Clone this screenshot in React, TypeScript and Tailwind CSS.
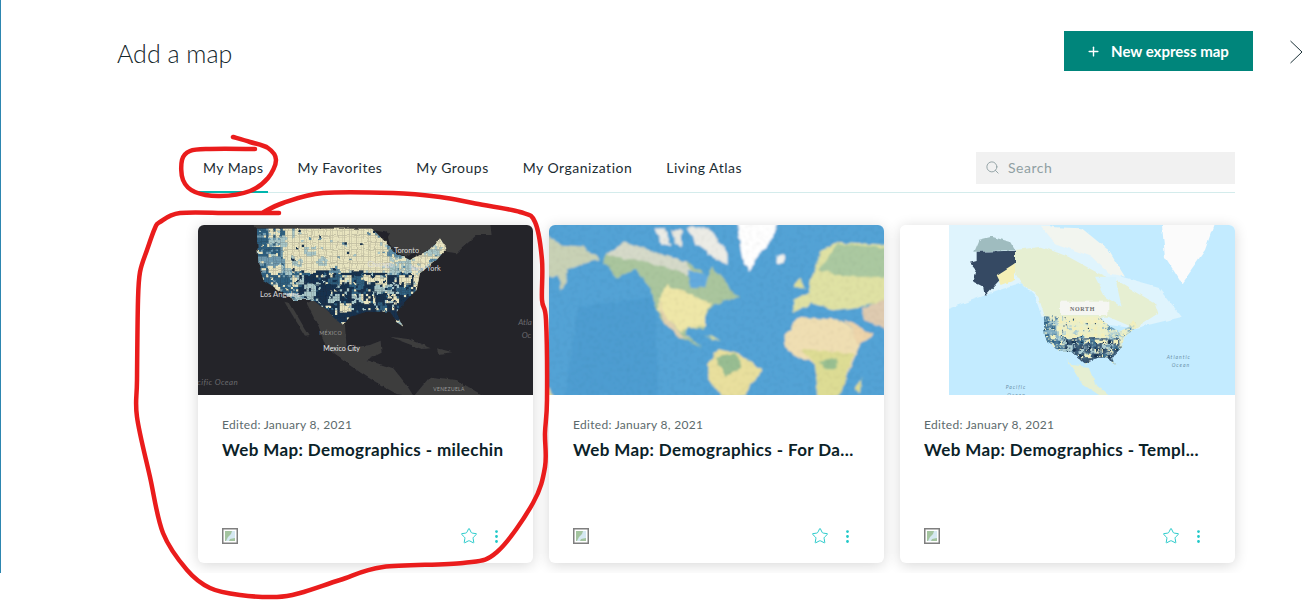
import { EllipsisVertical, Plus, Search, Star } from 'lucide-react';

const tabs = ['My Maps', 'My Favorites', 'My Groups', 'My Organization', 'Living Atlas'];

const cards = [
  { id: 'dark', title: 'Web Map: Demographics - milechin' },
  { id: 'imagery', title: 'Web Map: Demographics - For Da...' },
  { id: 'topo', title: 'Web Map: Demographics - Templ...' },
];

// all map shapes are written in the 3x coordinates of the card crop
const usOutline =
  '200,25 545,25 590,70 610,95 660,120 720,90 750,55 770,85 740,120 690,160 680,210 640,250 620,280 640,320 625,310 600,275 530,275 480,290 460,315 420,280 370,240 310,240 220,180 205,130';

function hash(a: number, b: number) {
  const n = Math.sin(a * 12.9898 + b * 78.233) * 43758.5453;
  return n - Math.floor(n);
}

function cellColor(u: number, v: number, r: number, beige: string) {
  const south = u > 0.24 && u < 0.84 && v > 0.42 && v < 0.92;
  const north = u > 0.17 && u < 0.66 && v <= 0.42;
  if (south) return r < 0.6 ? '#17324f' : r < 0.72 ? '#2f6080' : r < 0.85 ? '#a9c7c8' : beige;
  if (north) return r < 0.9 ? beige : r < 0.95 ? '#a9c7c8' : r < 0.98 ? '#5f8fa8' : '#17324f';
  if (u <= 0.24) return r < 0.22 ? '#2f6080' : r < 0.5 ? '#6f9bb0' : r < 0.75 ? '#a9c7c8' : beige;
  return r < 0.6 ? beige : r < 0.85 ? '#a9c7c8' : '#5f8fa8';
}

function UsMosaic({ id, beige }: { id: string; beige: string }) {
  const cols = 80;
  const rows = 42;
  const cells = [];
  for (let row = 0; row < rows; row++) {
    for (let col = 0; col < cols; col++) {
      const cx = Math.floor(col / 5);
      const cy = Math.floor(row / 4);
      // blotches of neighbouring counties share a colour, the rest is speckle
      const coarse = hash(col * 3 + 1, row * 7 + 2) > 0.35;
      const r = coarse ? hash(cx, cy) : hash(col, row);
      const u = col / cols + (hash(cx + 9, cy) - 0.5) * 0.09;
      const v = row / rows + (hash(cx, cy + 9) - 0.5) * 0.08;
      cells.push(
        <rect key={`${row}-${col}`} x={200 + col * 7.125} y={25 + row * 7.03} width={7.6} height={7.5} fill={cellColor(u, v, r, beige)} />,
      );
    }
  }
  return (
    <>
      <clipPath id={id}>
        <polygon points={usOutline} />
      </clipPath>
      <g clipPath={`url(#${id})`}>{cells}</g>
    </>
  );
}

// wobbly coastlines plus the soft look of a scaled thumbnail
function MapFilter({ id, blur, wobble }: { id: string; blur: number; wobble: number }) {
  return (
    <filter id={id} x="-5%" y="-5%" width="110%" height="110%">
      <feTurbulence type="fractalNoise" baseFrequency="0.035" numOctaves="3" seed="4" result="noise" />
      <feDisplacementMap in="SourceGraphic" in2="noise" scale={wobble} xChannelSelector="R" yChannelSelector="G" />
      <feGaussianBlur stdDeviation={blur} />
    </filter>
  );
}

function DarkMap() {
  const label = 'fill-[#d8d8d8] font-[Lato,sans-serif]';
  const faint = 'fill-[#6a6a6e] font-[Lato,sans-serif] italic';
  return (
    <svg viewBox="0 0 335 170" className="block h-[170px] w-[335px]">
      <MapFilter id="map-dark" blur={2.2} wobble={10} />
      <rect width="335" height="170" fill="#242429" />
      <g transform="translate(-8 -5) scale(0.3333)">
        <g filter="url(#map-dark)">
          <polygon points="180,5 900,5 905,45 860,45 800,100 770,95 750,55 720,90 660,115 620,95 590,70 545,25 200,25" fill="#3c3c3e" />
          <polygon points="570,80 590,35 600,75 585,125 568,125" fill="#242429" />
          <polygon points="620,125 690,90 680,105 640,130" fill="#242429" />
          <polygon points="548,30 600,40 590,58 555,48" fill="#242429" />
          <polygon points="350,250 370,240 420,280 465,315 470,385 540,375 572,362 575,398 530,420 610,445 650,495 672,530 620,522 530,470 470,430 410,385 385,320" fill="#3c3c3e" />
          <polygon points="283,245 300,250 356,345 345,347" fill="#3c3c3e" />
          <polygon points="600,350 660,358 722,385 695,387 640,366" fill="#3c3c3e" />
          <polygon points="740,385 790,397 745,402" fill="#3c3c3e" />
          <polygon points="670,530 720,470 800,480 885,530" fill="#3c3c3e" />
          <UsMosaic id="us-dark" beige="#e9e5c0" />
        </g>
        <text x="210" y="231" fontSize="23" className={label}>Los Angeles</text>
        <text x="612" y="100" fontSize="22" className={label}>Toronto</text>
        <text x="533" y="141" fontSize="22" className={label}>Chicago</text>
        <text x="660" y="153" fontSize="22" className={label}>New York</text>
        <text x="388" y="345" fontSize="16" letterSpacing="1" className="fill-[#9a9a9a] font-[Lato,sans-serif]">MÉXICO</text>
        <text x="400" y="392" fontSize="21" className="fill-[#ececec] font-[Lato,sans-serif]">Mexico City</text>
        <text x="22" y="495" fontSize="24" letterSpacing="1" className={faint}>cific Ocean</text>
        <text x="985" y="315" fontSize="24" className={faint}>Atla</text>
        <text x="995" y="355" fontSize="24" className={faint}>Oc</text>
        <text x="730" y="512" fontSize="15" letterSpacing="1" className="fill-[#9a9a9a] font-[Lato,sans-serif]">VENEZUELA</text>
      </g>
    </svg>
  );
}

function ImageryMap() {
  return (
    <svg viewBox="0 0 335 170" className="block h-[170px] w-[335px]">
      <filter id="map-imagery" x="0" y="0" width="100%" height="100%">
        <feTurbulence type="fractalNoise" baseFrequency="0.035" numOctaves="3" seed="4" result="noise" />
        <feDisplacementMap in="SourceGraphic" in2="noise" scale="16" xChannelSelector="R" yChannelSelector="G" result="moved" />
        <feTurbulence type="fractalNoise" baseFrequency="0.09" numOctaves="2" seed="8" result="tex" />
        <feColorMatrix in="tex" type="matrix" values="0.3 0 0 0 0.84  0.3 0 0 0 0.84  0.3 0 0 0 0.84  0 0 0 0 1" result="grain" />
        <feBlend in="moved" in2="grain" mode="multiply" />
        <feGaussianBlur stdDeviation="2.5" />
      </filter>
      <g transform="translate(-4 -5) scale(0.3333)" filter="url(#map-imagery)">
        <rect x="-40" y="-40" width="1120" height="620" fill="#53a3d6" />
        <polygon points="100,260 330,230 340,525 60,525" fill="#4e9dd1" />
        <polygon points="575,5 700,5 680,60 640,110 610,155 590,110" fill="#ffffff" />
        <polygon points="330,25 360,25 380,80 350,75" fill="#ecece6" />
        <polygon points="375,30 410,30 412,80 390,70" fill="#e8e8e0" />
        <polygon points="425,25 490,25 548,95 548,135 510,115 450,70" fill="#ecece6" />
        <polygon points="0,45 60,75 120,80 165,118 120,130 70,150 55,205 45,212 42,170 0,170" fill="#c9d2b6" />
        <polygon points="185,105 240,65 340,100 430,130 490,170 500,135 530,170 582,235 540,240 500,260 480,290 480,330 430,320 420,345 475,385 450,372 400,350 360,310 330,260 320,210 270,150 215,175 175,120" fill="#aac69e" />
        <polygon points="185,105 240,65 340,100 430,130 440,170 340,135 270,120" fill="#d6dac9" />
        <polygon points="425,150 490,165 480,205 440,200" fill="#63aade" />
        <polygon points="365,195 440,225 500,250 480,290 480,320 430,320 410,340 370,300 340,270 340,240" fill="#efe7a8" />
        <polygon points="340,240 370,300 410,345 440,355 400,350 360,310" fill="#e3d2ae" />
        <polygon points="480,345 530,358 510,362" fill="#cfd9a0" />
        <polygon points="490,430 520,385 570,395 650,450 600,530 530,530 490,470" fill="#e9e09e" />
        <polygon points="510,410 570,400 590,440 540,470" fill="#98bd92" />
        <polygon points="745,240 790,215 800,170 830,90 880,65 1030,75 1030,240 950,260 870,270 800,250 745,280" fill="#e0e2a4" />
        <polygon points="820,150 880,70 1030,85 1030,170 920,170" fill="#abc9a1" />
        <polygon points="745,205 765,170 780,205" fill="#dcde9a" />
        <polygon points="690,110 720,105 720,125 700,130" fill="#f2f3ef" />
        <polygon points="715,350 760,290 900,300 945,375 925,420 880,530 820,530 810,430 730,395" fill="#f0dfb3" />
        <polygon points="770,390 925,400 885,530 820,530 810,430" fill="#dedd94" />
        <polygon points="825,425 880,415 875,445 830,445" fill="#99bf91" />
        <polygon points="900,295 985,345 940,375" fill="#eed5ab" />
        <polygon points="930,510 950,470 945,520" fill="#dedd94" />
        <polygon points="950,265 1030,235 1030,330 960,300" fill="#dfcbb0" />
        <polygon points="0,490 30,530 0,530" fill="#e9e09e" />
      </g>
    </svg>
  );
}

function TopoMap() {
  const sea = 'fill-[#6a8fa8] font-[Lato,sans-serif] italic';
  return (
    <svg viewBox="0 0 335 170" className="block h-[170px] w-[335px]">
      <MapFilter id="map-topo" blur={2} wobble={12} />
      <rect width="335" height="170" fill="#ffffff" />
      <svg x="49" width="286" height="170" viewBox="49 0 286 170">
        <rect x="49" width="286" height="170" fill="#c3ebff" />
        <g transform="translate(-5 -5) scale(0.3333)">
          <g filter="url(#map-topo)">
            <polygon points="150,270 300,215 380,190 420,230 440,290 720,325 860,290 790,200 680,170 640,90 560,60 440,5 150,5" fill="#dff4fd" />
            <polygon points="360,90 440,80 520,110 610,160 680,190 780,250 790,280 720,325 640,290 450,290 430,230 380,190 345,130" fill="#e6efd2" />
            <polygon points="440,20 560,25 640,90 690,170 640,160 590,110 480,70" fill="#f2f5ef" />
            <polygon points="600,170 660,170 680,260 630,230" fill="#d9f3fd" />
            <polygon points="800,5 960,5 930,90 860,190 810,110" fill="#fbfbfb" />
            <polygon points="445,330 530,435 580,440 600,490 650,530 620,530 560,490 510,410" fill="#e6efd2" />
            <polygon points="235,95 250,60 290,50 345,65 360,90" fill="#9fbcbf" />
            <polygon points="225,125 245,120 245,95 360,92 360,130 305,190 270,228 265,200 235,185 245,150" fill="#344a63" />
            <polygon points="305,165 360,130 360,180 320,195" fill="#f4efb6" />
            <rect x="495" y="245" width="145" height="40" fill="#f5f6f2" />
            <g transform="translate(348 276) scale(0.49 0.5)">
              <UsMosaic id="us-topo" beige="#f5efb8" />
            </g>
          </g>
          <text x="525" y="272" fontSize="18" fontWeight="700" letterSpacing="2" className="fill-[#6e6e6e] font-['Liberation_Serif',serif]">NORTH</text>
          <text x="815" y="417" fontSize="15" letterSpacing="3" className={sea}>Atlantic</text>
          <text x="830" y="440" fontSize="15" letterSpacing="3" className={sea}>Ocean</text>
          <text x="332" y="507" fontSize="15" letterSpacing="3" className={sea}>Pacific</text>
          <text x="337" y="530" fontSize="15" letterSpacing="3" className={sea}>Ocean</text>
        </g>
      </svg>
    </svg>
  );
}

function WebMapIcon() {
  return (
    <svg viewBox="0 0 16 16" className="h-4 w-4 shrink-0">
      <rect x="0.75" y="0.75" width="14.5" height="14.5" fill="#fff" stroke="#7f7f7f" strokeWidth="1.5" />
      <rect x="3" y="3" width="10" height="10" fill="#d5e8f2" />
      <polygon points="3,3 10,3 9,6 6,9 4,13 3,13" fill="#a3c49f" />
      <polygon points="8,11 13,10 13,13 7,13" fill="#a3c49f" />
    </svg>
  );
}

function MapCard({ id, title }: { id: string; title: string }) {
  return (
    <div className="flex h-[338px] w-[335px] flex-col overflow-hidden rounded-md bg-white shadow-[0_2px_14px_rgba(0,0,0,0.16)]">
      {id === 'dark' ? <DarkMap /> : id === 'imagery' ? <ImageryMap /> : <TopoMap />}
      <div className="flex flex-1 flex-col px-6 pt-[22px] pb-[18px]">
        <p className="text-[12px] leading-4 tracking-[0.3px] text-[#5c6a6c]">Edited: January 8, 2021</p>
        <h3 className="mt-[5px] text-[17px] leading-6 font-bold tracking-[0.38px] whitespace-nowrap text-[#0b2228]">{title}</h3>
        <div className="mt-auto flex items-center justify-between">
          <WebMapIcon />
          <div className="flex items-center gap-[10px] pr-[4px] text-[#1ec8c8]">
            <Star size={18} strokeWidth={1.25} />
            <EllipsisVertical size={17} strokeWidth={2} />
          </div>
        </div>
      </div>
    </div>
  );
}

// smooths the hand drawn marker strokes
function smooth(pts: number[][]) {
  let d = `M${pts[0][0]} ${pts[0][1]}`;
  for (let i = 0; i < pts.length - 1; i++) {
    const p0 = pts[Math.max(i - 1, 0)];
    const p1 = pts[i];
    const p2 = pts[i + 1];
    const p3 = pts[Math.min(i + 2, pts.length - 1)];
    d += ` C${p1[0] + (p2[0] - p0[0]) / 6} ${p1[1] + (p2[1] - p0[1]) / 6} ${p2[0] - (p3[0] - p1[0]) / 6} ${p2[1] - (p3[1] - p1[1]) / 6} ${p2[0]} ${p2[1]}`;
  }
  return d;
}

const tabCircle = [
  [233, 137], [250, 142], [268, 148], [276, 160], [268, 178], [250, 191], [220, 196], [195, 192],
  [183, 180], [182, 160], [190, 151], [210, 149], [255, 149],
];

const cardCircle = [
  [279, 213], [230, 213], [180, 213], [160, 222], [155, 228], [147, 250], [140, 272], [138, 300], [137, 380], [137, 417],
  [150, 477], [163, 533], [187, 570], [210, 588], [240, 595], [277, 597], [300, 593], [340, 580], [383, 567],
  [463, 563], [497, 552], [533, 503], [545, 467], [545, 433], [547, 400], [546, 320], [542, 300], [542, 260],
  [535, 222], [520, 212], [473, 203], [440, 197], [393, 193], [323, 193], [283, 203], [262, 213],
];

export default function App() {
  return (
    <div className="relative h-[600px] w-[1302px] overflow-hidden bg-white font-[Lato,sans-serif]">
      <main className="h-[573px] overflow-hidden border-l border-[#2d86b0] bg-white">
        <header className="flex items-start pt-[31px] pl-[116px]">
          <h1 className="flex-1 pt-[4px] text-[25px] leading-[36px] font-light text-[#14262b]">Add a map</h1>
          <button className="flex h-10 w-[189px] items-center justify-center gap-[10px] bg-[#00857b] pr-[2px] text-[15px] font-bold text-white">
            <Plus size={15} strokeWidth={2.25} />
            New express map
          </button>
          <svg viewBox="0 0 12 24" className="mt-[9px] ml-[37px] h-6 w-3 shrink-0">
            <path d="M0.5 1L12 12L0.5 23" fill="none" stroke="#1c3238" strokeWidth="1" />
          </svg>
        </header>

        <section className="mt-[81px] ml-[197px] w-[1037px]">
          <div className="flex h-[41px] items-start justify-between border-b border-[#d4ecec]">
            <nav className="flex gap-6">
              {tabs.map((tab, i) => (
                <button
                  key={tab}
                  className={`h-[41px] border-b-2 px-[5px] pb-[8px] text-[14px] tracking-[0.5px] text-[#1c2d33] ${i === 0 ? 'border-[#00b5ad]' : 'border-transparent'}`}
                >
                  {tab}
                </button>
              ))}
            </nav>
            <div className="flex h-8 w-[259px] items-center gap-2 bg-[#f1f1f1] pb-[1px] pl-[9px] text-[14px] tracking-[0.5px] text-[#90a0a3]">
              <Search size={15} strokeWidth={1.5} />
              Search
            </div>
          </div>

          <div className="mt-[32px] flex gap-4">
            {cards.map((card) => (
              <MapCard key={card.id} id={card.id} title={card.title} />
            ))}
          </div>
        </section>
      </main>

      {/* marker scribbles on top of the screenshot */}
      <svg viewBox="0 0 1302 600" className="pointer-events-none absolute inset-0 h-[600px] w-[1302px]">
        <path d={smooth(tabCircle)} fill="none" stroke="#ea1c1c" strokeWidth="4.5" strokeLinecap="round" />
        <path d={smooth(cardCircle)} fill="none" stroke="#ea1c1c" strokeWidth="4.5" strokeLinecap="round" />
      </svg>
    </div>
  );
}
